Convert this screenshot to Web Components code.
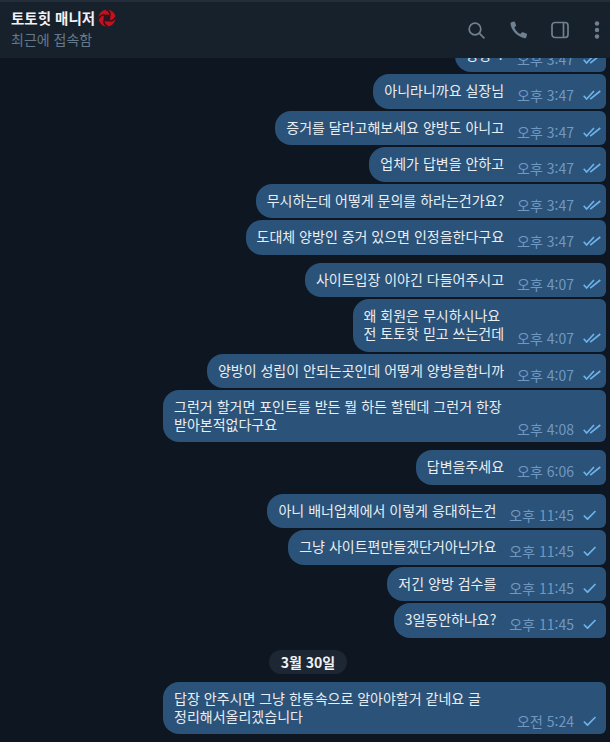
<!DOCTYPE html>
<html lang="ko">
<head>
<meta charset="utf-8">
<title>토토힛 매니저</title>
<style>
  html, body { margin: 0; height: 100%; }
  body {
    background: #0e1621;
    font-family: "Noto Sans CJK KR", "Noto Sans", sans-serif;
    overflow: hidden;
  }
  chat-bubble span { display: block; height: 18px; overflow: hidden; }
</style>
</head>
<body>
<chat-app>
  <chat-header slot="header" name="토토힛 매니저" status="최근에 접속함"></chat-header>
  <chat-bubble time="오후 3:47" read><span style="word-spacing:2px">양방 ?</span></chat-bubble>
  <chat-bubble time="오후 3:47" read>아니라니까요 실장님</chat-bubble>
  <chat-bubble time="오후 3:47" read>증거를 달라고해보세요 양방도 아니고</chat-bubble>
  <chat-bubble time="오후 3:47" read>업체가 답변을 안하고</chat-bubble>
  <chat-bubble time="오후 3:47" read>무시하는데 어떻게 문의를 하라는건가요?</chat-bubble>
  <chat-bubble time="오후 3:47" read>도대체 양방인 증거 있으면 인정을한다구요</chat-bubble>
  <chat-bubble time="오후 4:07" read gap="6">사이트입장 이야긴 다들어주시고</chat-bubble>
  <chat-bubble time="오후 4:07" read><span>왜 회원은 무시하시나요</span><span>전 토토핫 믿고 쓰는건데</span></chat-bubble>
  <chat-bubble time="오후 4:07" read>양방이 성립이 안되는곳인데 어떻게 양방을합니까</chat-bubble>
  <chat-bubble time="오후 4:08" read wide><span>그런거 할거면 포인트를 받든 뭘 하든 할텐데 그런거 한장</span><span>받아본적없다구요</span></chat-bubble>
  <chat-bubble time="오후 6:06" read gap="6">답변을주세요</chat-bubble>
  <chat-bubble time="오후 11:45" gap="7">아니 배너업체에서 이렇게 응대하는건</chat-bubble>
  <chat-bubble time="오후 11:45">그냥 사이트편만들겠단거아닌가요</chat-bubble>
  <chat-bubble time="오후 11:45">저긴 양방 검수를</chat-bubble>
  <chat-bubble time="오후 11:45">3일동안하나요?</chat-bubble>
  <chat-date>3월 30일</chat-date>
  <chat-bubble time="오전 5:24" wide><span>답장 안주시면 그냥 한통속으로 알아야할거 같네요 글</span><span>정리해서올리겠습니다</span></chat-bubble>
</chat-app>

<script>
class ChatApp extends HTMLElement {
  constructor() {
    super();
    this.attachShadow({mode: 'open'}).innerHTML = `
      <style>
        :host { display: flex; flex-direction: column; height: 742px; }
        .top { flex: none; }
        .log {
          flex: 1;
          min-height: 0;
          overflow: hidden;
          display: flex;
          flex-direction: column;
          justify-content: flex-end;
          gap: 2px;
          padding: 0 4px 8px 0;
        }
      </style>
      <div class="top"><slot name="header"></slot></div>
      <div class="log"><slot></slot></div>
    `;
  }
}

class ChatHeader extends HTMLElement {
  constructor() {
    super();
    const cut = 'M13.200 7.800C13.800 4.800 12.200 2 9 .6';
    this.attachShadow({mode: 'open'}).innerHTML = `
      <style>
        :host {
          display: flex;
          align-items: center;
          justify-content: space-between;
          height: 56px;
          background: #17212b;
          border-top: 2px solid #232e3a;
          padding: 0 10px 0 11px;
          color: #6f8090;
        }
        .info { margin-top: -4px; }
        .name { display: flex; align-items: center; gap: 3px; color: #f0f2f4; font-size: 14.500px; font-weight: 700; line-height: 19px; }
        .status { font-size: 14px; line-height: 19px; color: #66788a; margin-top: 3px; }
        .tools { display: flex; align-items: center; }
        svg { display: block; }
        .tools svg + svg { margin-left: 25px; }
        .tools svg:nth-child(3) { margin-left: 23px; }
        .tools svg:last-child { margin-left: 25px; }
        .logo { margin-top: 1px; }
      </style>
      <div class="info">
        <div class="name"><span>${this.getAttribute('name')}</span>
          <svg class="logo" width="18" height="18" viewBox="0 0 20 20">
            <circle cx="10" cy="10" r="9.500" fill="#c2121d"/>
            <circle cx="10" cy="10" r="3.800" fill="#2a1520"/>
            <g fill="none" stroke="#3a0d16" stroke-width="1.600">
              <path d="${cut}"/>
              <path d="${cut}" transform="rotate(90 10 10)"/>
              <path d="${cut}" transform="rotate(180 10 10)"/>
              <path d="${cut}" transform="rotate(270 10 10)"/>
            </g>
          </svg>
        </div>
        <div class="status">${this.getAttribute('status')}</div>
      </div>
      <div class="tools">
        <svg width="17" height="17" viewBox="0 0 17 17" fill="none" stroke="currentColor" stroke-width="1.700"><circle cx="7" cy="7" r="5.800"/><path d="M11.200 11.200L16.400 16.400"/></svg>
        <svg width="18" height="18" viewBox="0 0 18 18" fill="currentColor"><path d="M1.400 1.200L3.800.500c.5-.1.900.1 1.100.6l1.100 3c.2.400 0 .8-.3 1.100L4.400 6.400c.9 2.700 3.400 5.400 6 6.500l1.300-1.400c.3-.3.800-.4 1.200-.2l3.500 1.300c.5.200.7.700.6 1.100l-.7 2.600c-.2.700-.7 1.100-1.400 1C7.400 15.800 1 9.400.5 2.500c0-.6.300-1.100.9-1.300z"/></svg>
        <svg width="18" height="18" viewBox="0 0 18 18" fill="none" stroke="currentColor" stroke-width="1.700"><rect x="1" y="1.500" width="16" height="15" rx="3"/><path d="M12.500 1.500v15"/></svg>
        <svg width="6" height="18" viewBox="0 0 6 18" fill="currentColor"><circle cx="3" cy="2.500" r="2.200"/><circle cx="3" cy="9" r="2.200"/><circle cx="3" cy="15.500" r="2.200"/></svg>
      </div>
    `;
  }
}

class ChatBubble extends HTMLElement {
  constructor() {
    super();
    const read = this.hasAttribute('read');
    const gap = this.getAttribute('gap') || 0;
    const ticks = read
      ? '<path d="M.7 5.800L3.600 9 11 1M7.200 9.200L17.300 1"/>'
      : '<path d="M.8 5.500L4.500 9.200 12.500 1"/>';
    this.attachShadow({mode: 'open'}).innerHTML = `
      <style>
        :host { display: flex; justify-content: flex-end; margin-top: ${gap}px; }
        .b {
          background: #2b5278;
          color: #e9eef3;
          font-size: 14px;
          line-height: 18px;
          padding: 7px 4px 9.450px 11px;
          border-radius: 16px 6px 6px 16px;
          display: flex;
          gap: 13px;
          align-items: flex-end;
        }
        .t { min-width: ${this.hasAttribute('wide') ? 330 : 0}px; }
        .meta {
          display: flex;
          align-items: center;
          gap: 9px;
          color: #7099c2;
          font-size: 14px;
          line-height: 16px;
          white-space: nowrap;
          margin-bottom: -4px;
        }
        svg { fill: none; stroke: #6db2ea; stroke-width: 1.700; display: block; }
      </style>
      <div class="b">
        <div class="t"><slot></slot></div>
        <div class="meta"><span>${this.getAttribute('time')}</span>
          <svg width="19" height="10" viewBox="0 0 19 10">${ticks}</svg>
        </div>
      </div>
    `;
  }
}

class ChatDate extends HTMLElement {
  constructor() {
    super();
    this.attachShadow({mode: 'open'}).innerHTML = `
      <style>
        :host { display: flex; justify-content: center; margin: 10px 0 6px 10px; }
        span {
          background: #1c2733;
          color: #f0f2f4;
          font-size: 14px;
          font-weight: 700;
          line-height: 24px;
          padding: 0 12px;
          border-radius: 12px;
        }
      </style>
      <span><slot></slot></span>
    `;
  }
}

customElements.define('chat-app', ChatApp);
customElements.define('chat-header', ChatHeader);
customElements.define('chat-bubble', ChatBubble);
customElements.define('chat-date', ChatDate);
</script>
</body>
</html>
